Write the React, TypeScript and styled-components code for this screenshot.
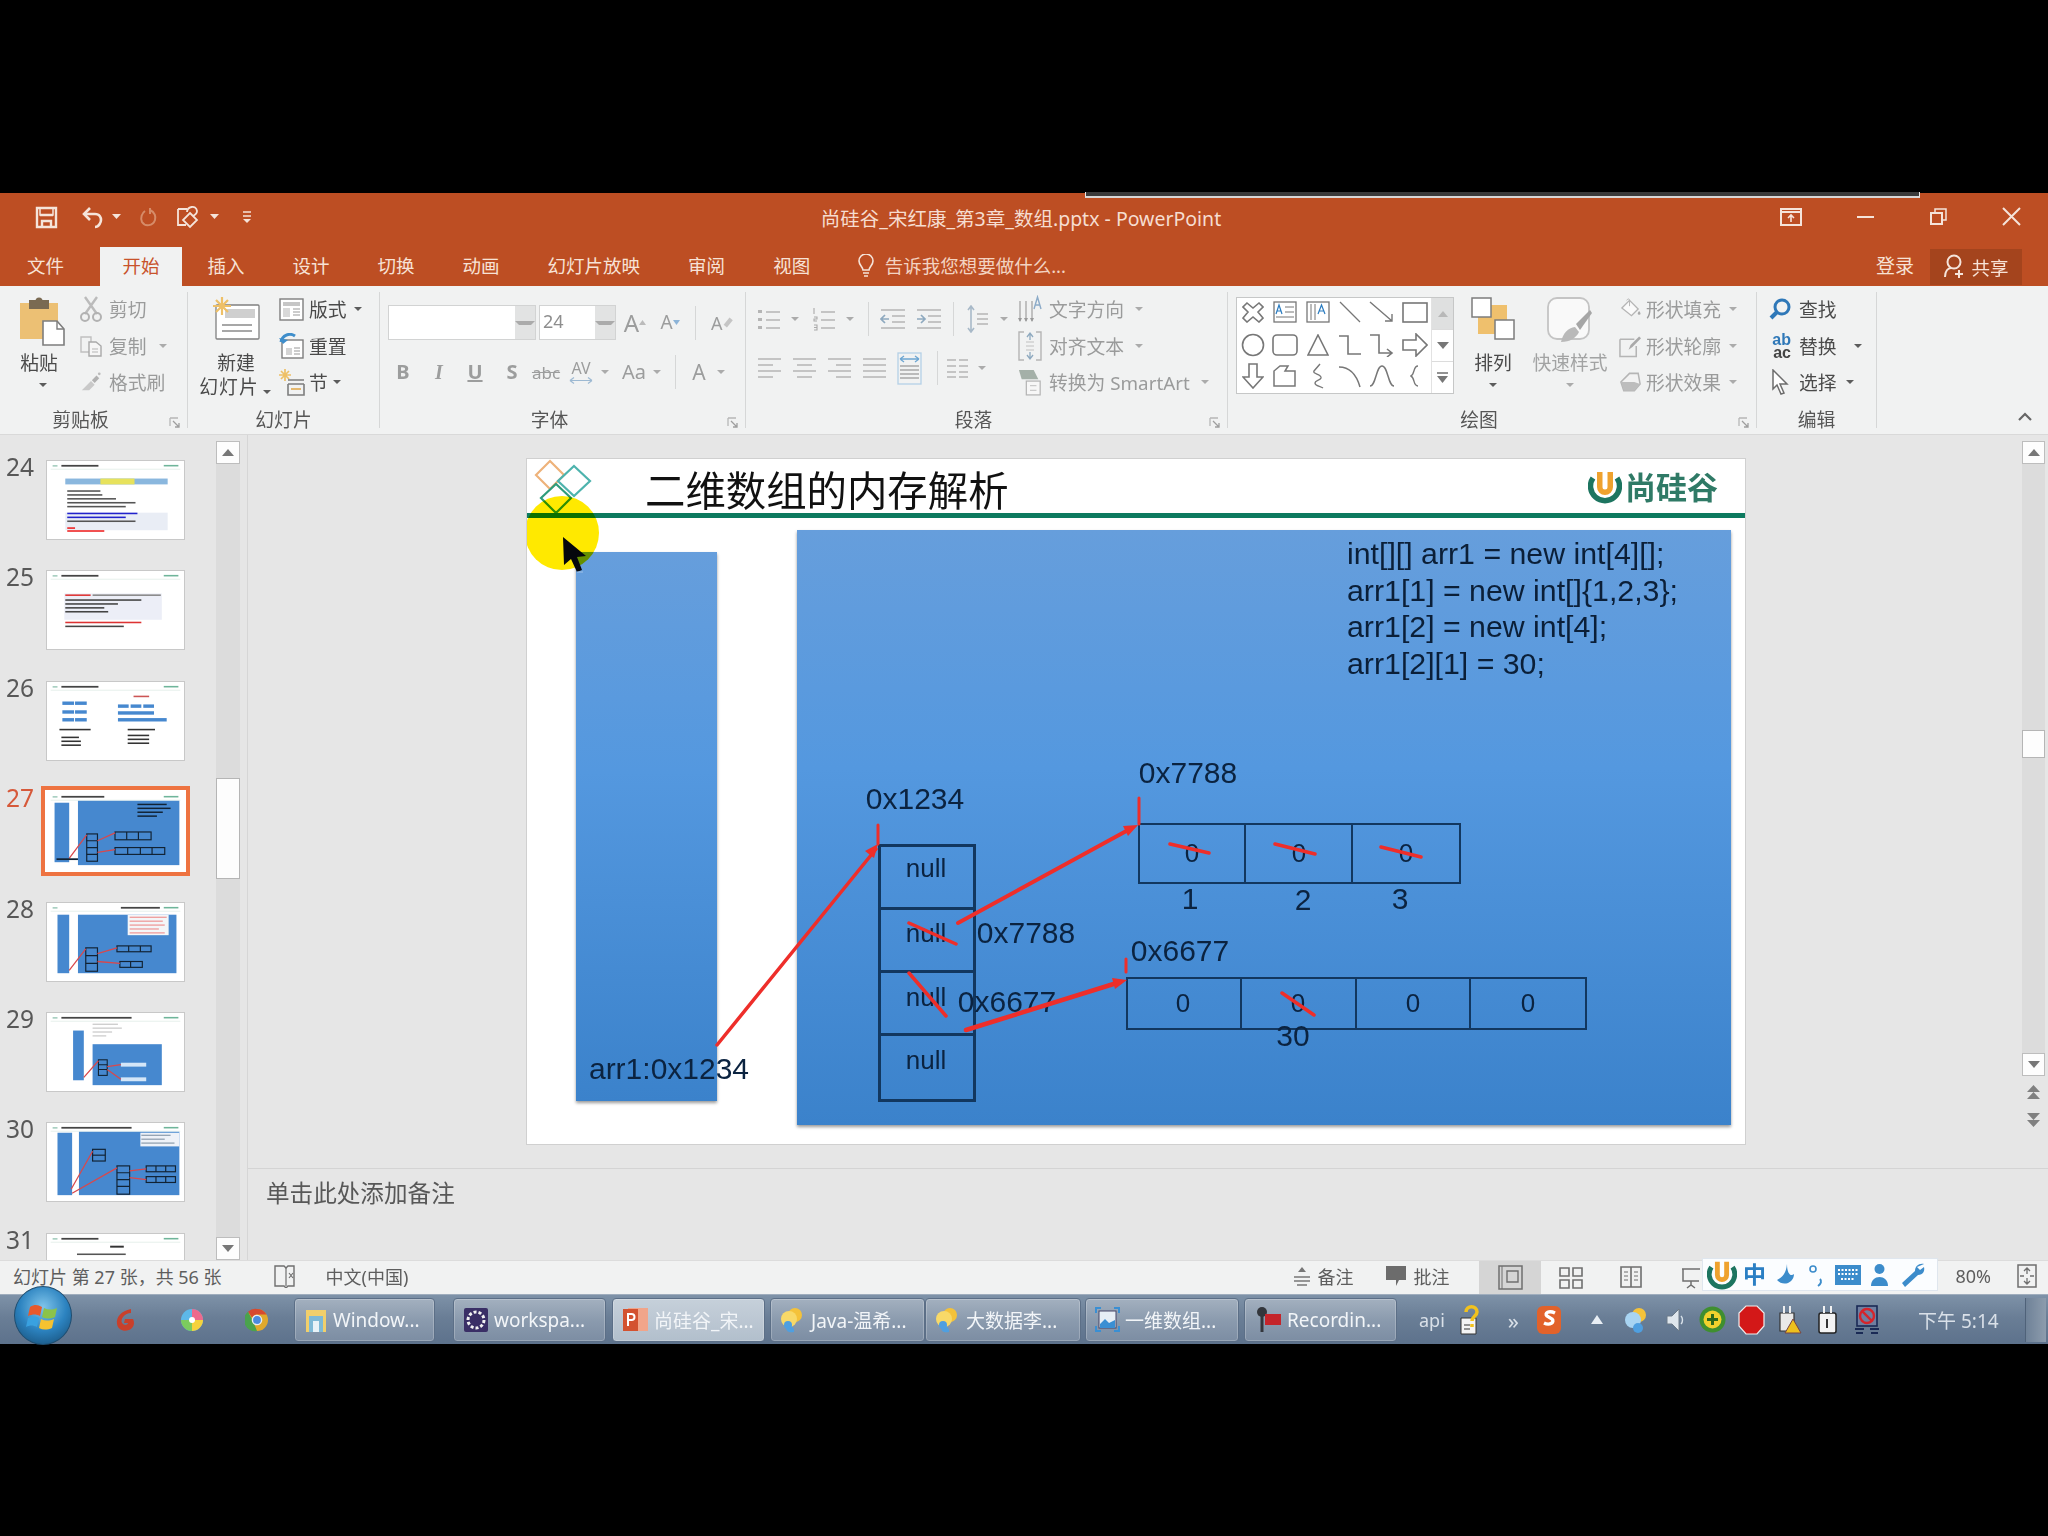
import React from "react";
import styled, { createGlobalStyle } from "styled-components";

const Global = createGlobalStyle`
  html, body { margin: 0; padding: 0; background: #000; }
  #root { width: 2048px; height: 1536px; overflow: hidden; }
  * { box-sizing: border-box; }
`;

const UI = `"Noto Sans", "Noto Sans CJK SC", sans-serif`;
const ARIAL = `"Liberation Sans", "Noto Sans CJK SC", sans-serif`;

/* ---------- shell ---------- */
const Screen = styled.div`
  width: 2048px; height: 1536px; background: #000; padding-top: 193px;
  font-family: ${UI}; position: relative; overflow: hidden;
`;
const VideoEdge = styled.div`
  position: absolute; left: 1085px; top: 192px; width: 835px; height: 6px;
  background: #3a3a3a; border: 1px solid #e8e8e8; border-top: 0; border-bottom: 2px solid #d8d8d8; z-index: 3;
`;
const Win = styled.div`
  width: 2048px; height: 1151px; display: flex; flex-direction: column; filter: blur(0.6px);
`;
const TitleBar = styled.div`
  height: 54px; background: #bd4e23; display: grid; grid-template-columns: 1fr auto 1fr;
  align-items: center; color: #f7e4da;
`;
const Qat = styled.div`display: flex; align-items: center; padding-left: 35px; height: 100%; padding-bottom: 6px;`;
const QatBtn = styled.div<{ $w: number; $ml?: number }>`
  width: ${p => p.$w}px; margin-left: ${p => p.$ml ?? 0}px; display: flex; justify-content: center; align-items: center;
`;
const DocTitle = styled.div`
  font-size: 19.5px; color: #f6ddd0; padding-right: 6px; white-space: nowrap; padding-bottom: 6px;
`;
const WinCtrls = styled.div`display: flex; justify-content: flex-end; align-items: center; padding-bottom: 7px;`;
const WinBtn = styled.div<{ $w: number }>`
  width: ${p => p.$w}px; display: flex; justify-content: center;
`;
const Tabs = styled.div`
  height: 39px; background: #bd4e23; display: flex; align-items: stretch; padding-left: 4.5px; color: #f7e2d6;
`;
const Tab = styled.div<{ $active?: boolean; $mr?: number }>`
  padding: 0 22.5px 3px; margin-right: ${p => p.$mr ?? 3}px; font-size: 18.5px; display: flex; align-items: center;
  ${p => p.$active ? "background:#f1f2f2;color:#c8532b;" : ""}
`;
const TellMe = styled.div`
  margin-left: 22px; display: flex; align-items: center; gap: 11px; font-size: 18.5px; color: #f3d3c2; padding-bottom: 3px;
`;
const TabRight = styled.div`margin-left: auto; display: flex; align-items: center; padding-right: 26px;`;
const Login = styled.div`font-size: 19px; margin-right: 16px; padding-bottom: 3px;`;
const Share = styled.div`
  width: 92px; height: 36px; background: #a4441d; display: flex; align-items: center; justify-content: center; gap: 6px; font-size: 18.5px;
`;

/* ---------- ribbon ---------- */
const Ribbon = styled.div`
  height: 149px; background: #f1f2f2; display: flex; padding: 6px 0 6px; border-bottom: 1px solid #d9d9d9; position: relative;
`;
const Group = styled.div<{ $w: number }>`
  width: ${p => p.$w}px; display: flex; flex-direction: column; border-right: 1px solid #d6d7d7;
`;
const GroupBody = styled.div<{ $pl?: number; $gap?: number }>`
  height: 118px; flex: none; display: flex; padding-left: ${p => p.$pl ?? 0}px; gap: ${p => p.$gap ?? 0}px;
`;
const GroupFoot = styled.div`height: 18px; flex: none; display: flex; align-items: center;`;
const GroupName = styled.div`flex: 1; text-align: center; font-size: 18.8px; color: #565656; white-space: nowrap;`;
const Launcher = styled.div`width: 26px; display: flex; justify-content: center; padding-top: 6px;`;
const Big = styled.div<{ $w: number; $off?: boolean; $ml?: number }>`
  width: ${p => p.$w}px; margin-left: ${p => p.$ml ?? 0}px; display: flex; flex-direction: column; align-items: center; flex: none;
  color: ${p => p.$off ? "#a2a3a3" : "#4a4a4a"}; font-size: 18.8px; line-height: 24px; white-space: nowrap;
`;
const BigIcon = styled.div`height: 59px; padding-top: 5px; display: flex; justify-content: center; align-items: flex-start;`;
const PasteLabel = styled.span`margin-right: 8px;`;
const WideLabel = styled.span`letter-spacing: 1px; margin-right: 2px;`;
const Small = styled.div<{ $ml?: number }>`display: flex; flex-direction: column; margin-top: -1px; margin-left: ${p => p.$ml ?? 0}px;`;
const SmallRow = styled.div<{ $off?: boolean; $gap?: number }>`
  height: 36.5px; display: flex; align-items: center; gap: ${p => p.$gap ?? 7}px;
  font-size: 18.8px; color: ${p => p.$off ? "#9a9b9b" : "#4a4a4a"}; white-space: nowrap;
`;
const SmallIcon = styled.div<{ $w: number }>`width: ${p => p.$w}px; display: flex; justify-content: center;`;
const ReplaceMark = styled.div`
  width: 22px; font-family: "Liberation Sans", sans-serif; font-weight: 700; font-size: 16px; line-height: 13px; text-align: right; color: #444;
  b { display: block; color: #2f78b8; }
`;
const Caret = styled.span<{ $off?: boolean; $ml?: number; $mt?: number }>`
  display: inline-block; width: 0; height: 0; border-left: 4px solid transparent; border-right: 4px solid transparent;
  border-top: 4.5px solid ${p => p.$off ? "#ababab" : "#5c5c5c"}; margin-left: ${p => p.$ml ?? 0}px; margin-top: ${p => p.$mt ?? 0}px; flex: none;
`;
const Rows = styled.div`display: flex; flex-direction: column;`;
const ToolRow = styled.div<{ $h: number; $mt: number }>`
  height: ${p => p.$h}px; margin-top: ${p => p.$mt}px; display: flex; align-items: center;
`;
const Tool = styled.div<{ $w: number; $ml?: number }>`
  width: ${p => p.$w}px; margin-left: ${p => p.$ml ?? 0}px; display: flex; justify-content: center; align-items: center; color: #a2a3a3; flex: none;
`;
const StackTool = styled(Tool)`flex-direction: column; line-height: 1;`;
const VSep = styled.div<{ $ml?: number; $mr?: number; $h?: number }>`
  width: 1px; height: ${p => p.$h ?? 34}px; background: #d6d7d7; margin-left: ${p => p.$ml ?? 0}px; margin-right: ${p => p.$mr ?? 0}px; flex: none;
`;
const Combo = styled.div<{ $w: number; $btn: number }>`
  width: ${p => p.$w}px; height: 35px; border: 1px solid #d2d3d3; background: #fff; display: flex; margin-right: 3px; color: #8e8e8e; font-size: 18px;
  span { flex: 1; padding-left: 3px; line-height: 30px; }
  i { width: ${p => p.$btn}px; background: #e2e3e3; display: flex; align-items: center; justify-content: center; }
`;
const FmtLetter = styled.span<{ $b?: boolean; $i?: boolean; $u?: boolean; $s?: number; $serif?: boolean; $c?: string }>`
  font-size: ${p => p.$s ?? 20}px; font-family: ${p => p.$serif ? `"Liberation Serif", serif` : UI};
  font-weight: ${p => p.$b ? 700 : 400}; font-style: ${p => p.$i ? "italic" : "normal"};
  text-decoration: ${p => p.$u ? "underline" : "none"}; color: ${p => p.$c ?? "#9c9d9d"}; line-height: 1;
`;
const Gallery = styled.div`
  width: 218px; height: 97px; margin: 5px 0 0 8px; border: 1px solid #c6c7c7; background: #fff; display: flex; flex: none;
`;
const ShapeGrid = styled.div`
  flex: 1; display: grid; grid-template-columns: repeat(6, 32.3px); grid-template-rows: 33px 33px 29px; justify-items: center; align-items: center;
`;
const GalScroll = styled.div`
  width: 22px; display: flex; flex-direction: column; border-left: 1px solid #e2e2e2;
`;
const GalBtn = styled.div<{ $off?: boolean }>`
  flex: 1; display: flex; align-items: center; justify-content: center; background: ${p => p.$off ? "#dfe0e0" : "#fff"};
  & + & { border-top: 1px solid #dcdcdc; }
`;
const Collapse = styled.div`position: absolute; right: 16px; bottom: 8px;`;

/* ---------- main ---------- */
const Main = styled.div`height: 825px; background: #e6e6e6; display: flex;`;
const Pane = styled.div`width: 248px; display: flex; border-right: 1px solid #d6d6d6;`;
const ThumbList = styled.div`width: 216px; padding-top: 25px; overflow: hidden; height: 825px;`;
const ThumbRow = styled.div`height: 110.4px; display: flex;`;
const ThumbNo = styled.div<{ $sel?: boolean }>`
  width: 46px; padding-left: 6px; font-size: 24.5px; line-height: 14px; color: ${p => p.$sel ? "#d6593a" : "#585858"};
`;
const Thumb = styled.div<{ $sel?: boolean }>`
  width: 139px; height: 80px; background: #fff; flex: none; border: 1px solid ${p => p.$sel ? "#fff" : "#c8c8c8"};
  ${p => p.$sel ? "box-shadow: 0 0 0 1px #fff, 0 0 0 5px #ee7341;" : ""}
`;
const ThumbSvg = styled.svg`display: block; filter: blur(0.6px);`;
const VScroll = styled.div<{ $w: number; $h?: number }>`
  width: ${p => p.$w}px; background: #dcdcdc; margin-top: 6px; display: flex; flex-direction: column; flex: none;
  height: ${p => p.$h ? p.$h + "px" : "auto"};
`;
const ScrollBtn = styled.div`
  height: 23px; background: #fdfdfd; border: 1px solid #bdbdbd; display: flex; align-items: center; justify-content: center; flex: none;
`;
const ScrollThumb = styled.div<{ $top: number; $h: number }>`
  height: ${p => p.$h}px; margin-top: ${p => p.$top}px; background: #fdfdfd; border: 1px solid #b5b5b5; flex: none;
`;
const Spacer = styled.div`flex: 1;`;
const Stage = styled.div`flex: 1; display: flex; flex-direction: column;`;
const SlideArea = styled.div`height: 734px; display: flex; border-bottom: 1px solid #d4d4d4;`;
const SlideWrap = styled.div`flex: 1; padding: 24px 0 0 279px;`;
const RightCol = styled.div`width: 25px; margin-right: 2px; display: flex; flex-direction: column; align-items: center;`;
const Nav = styled.div<{ $mt: number }>`margin-top: ${p => p.$mt}px; display: flex;`;
const Notes = styled.div`flex: 1; padding: 6px 0 0 18px; font-size: 23.6px; color: #585858;`;

/* ---------- slide ---------- */
const Slide = styled.div`
  width: 1218px; height: 685px; background: #fff; position: relative; box-shadow: 0 0 0 1px #d0d0d0; overflow: hidden;
`;
const SlideTitle = styled.div`
  position: absolute; left: 118px; top: 5px; font-size: 40.4px; line-height: 50px; color: #111; font-family: "Noto Sans CJK SC", sans-serif; white-space: nowrap;
`;
const HeadRule = styled.div`position: absolute; left: 0; right: 0; top: 54px; height: 5px; background: #0d7a5f;`;
const LogoBox = styled.div`position: absolute; left: 1061px; top: 11px; display: flex; align-items: center; gap: 3px;`;
const LogoText = styled.div`font-size: 31px; font-weight: 700; color: #2f7a66; font-family: "Noto Sans CJK SC", sans-serif; line-height: 34px; white-space: nowrap; margin-top: -3px;`;
const BlueBox = styled.div<{ $x: number; $y: number; $w: number; $h: number }>`
  position: absolute; left: ${p => p.$x}px; top: ${p => p.$y}px; width: ${p => p.$w}px; height: ${p => p.$h}px;
  background: linear-gradient(180deg, #669edc 0%, #5498df 40%, #3b82cb 100%);
  box-shadow: 0 2px 3px rgba(0,0,0,.4);
`;
const Code = styled.div`
  position: absolute; left: 820px; top: 77px; font-family: ${ARIAL}; font-size: 30.3px; line-height: 36.7px; color: #0b1f38; white-space: pre;
`;
const Lbl = styled.div<{ $x: number; $y: number; $s?: number }>`
  position: absolute; left: ${p => p.$x}px; top: ${p => p.$y}px; transform: translate(-50%, -50%);
  font-family: ${ARIAL}; font-size: ${p => p.$s ?? 30}px; color: #0b2340; white-space: nowrap; line-height: 1;
`;
const Stack = styled.div`
  position: absolute; left: 351px; top: 385px; width: 98px; height: 258px; border: 3px solid #12375f;
  display: grid; grid-template-rows: repeat(4, 1fr);
`;
const StackCell = styled.div`border-bottom: 3px solid #12375f; &:last-child { border-bottom: 0; }`;
const Cells = styled.div<{ $x: number; $y: number; $w: number; $h: number; $n: number }>`
  position: absolute; left: ${p => p.$x}px; top: ${p => p.$y}px; width: ${p => p.$w}px; height: ${p => p.$h}px;
  border: 2.5px solid #12375f; display: grid; grid-template-columns: repeat(${p => p.$n}, 1fr);
`;
const Cell = styled.div`border-right: 2.5px solid #12375f; &:last-child { border-right: 0; }`;
const Overlay = styled.svg<{ $x?: number; $y?: number }>`position: absolute; left: ${p => p.$x ?? 0}px; top: ${p => p.$y ?? 0}px;`;
const Highlight = styled.div`
  position: absolute; left: -2px; top: 37px; width: 74px; height: 74px; border-radius: 50%;
  background: #ffe900; mix-blend-mode: multiply;
`;

/* ---------- status + taskbar ---------- */
const Status = styled.div`
  height: 34px; background: #f1f2f2; border-top: 1px solid #dcdcdc; display: flex; align-items: center; font-size: 18px; color: #5e5e5e; position: relative;
`;
const StatusItem = styled.div<{ $ml: number; $pb?: number }>`
  margin-left: ${p => p.$ml}px; display: flex; align-items: center; gap: 7px; white-space: nowrap; padding-bottom: ${p => p.$pb ?? 3}px;
`;
const ViewBtn = styled.div<{ $w: number; $on?: boolean }>`
  width: ${p => p.$w}px; height: 33px; display: flex; align-items: center; justify-content: center; background: ${p => p.$on ? "#d5d5d5" : "transparent"};
`;
const Ime = styled.div`
  position: absolute; left: 1702px; top: -3px; width: 236px; height: 33px; background: #fbfdff; border: 1px solid #dfe6ee;
  display: flex; align-items: center; padding-left: 4px;
`;
const ImeCn = styled.div`font-size: 23px; color: #2b7fc4; font-weight: 700; margin-left: 6px; line-height: 1; width: 26px;`;
const TaskBar = styled.div`
  height: 50px; background: linear-gradient(180deg, #7e92a8 0%, #6a7e96 45%, #5d728c 100%); display: flex; align-items: center; position: relative; border-top: 1px solid #9fadbd;
`;
const Orb = styled.div`
  position: absolute; left: 14px; top: -9px; width: 58px; height: 59px; border-radius: 50%;
  background: radial-gradient(circle at 50% 35%, #7fc4ea 0%, #2c83c0 50%, #14486f 100%); border: 1px solid #1e4d70;
  display: flex; align-items: center; justify-content: center;
`;
const TrayIcon = styled.div<{ $ml: number }>`margin-left: ${p => p.$ml}px; display: flex; align-items: center; flex: none;`;
const TaskBtn = styled.div<{ $w: number; $ml: number; $on?: boolean }>`
  width: ${p => p.$w}px; margin-left: ${p => p.$ml}px; height: 44px; border-radius: 4px; flex: none;
  background: ${p => p.$on ? "linear-gradient(180deg,#c6d0da,#b2bfcc)" : "linear-gradient(180deg,#a3b0bf 0%,#8b9bae 50%,#7c8da3 100%)"};
  border: 1px solid #5c6f87; box-shadow: inset 0 0 0 1px rgba(255,255,255,.22);
  display: flex; align-items: center; gap: 5px; padding-left: 9px; color: #f2f5f8; font-size: 19px; white-space: nowrap; overflow: hidden;
`;
const TrayText = styled.div<{ $ml: number; $s?: number }>`margin-left: ${p => p.$ml}px; color: #d9e0e8; font-size: ${p => p.$s ?? 18}px; white-space: nowrap;`;
const ShowDesk = styled.div`margin-left: auto; margin-right: 2px; width: 21px; height: 44px; background: linear-gradient(90deg,#6f8298,#8d9cad); border-left: 1px solid #4f6279;`;

/* ---------- icons ---------- */
type SP = { w: number; h?: number; vb?: string; children: React.ReactNode };
const S = ({ w, h, vb, children }: SP) => (
  <svg width={w} height={h ?? w} viewBox={vb ?? `0 0 ${w} ${h ?? w}`} fill="none">{children}</svg>
);
const D = "#6f6f6f";
const W = "#f5e4da";

const I = {
  save: <S w={23}><path d="M2 2h19v19H2z" stroke={W} strokeWidth="2.4"/><path d="M5 9h13M7 21v-6h9v6" stroke={W} strokeWidth="2.4"/><path d="M5 2v7h13V2" stroke={W} strokeWidth="1.5"/></S>,
  undo: <S w={23}><path d="M9 2 3 8l6 6" stroke={W} strokeWidth="2.6"/><path d="M3 8h11c5 0 6 4 6 6s-2 7-6 7" stroke={W} strokeWidth="2.6"/></S>,
  redo: <S w={21}><path d="M13 3c5 2 6 7 5 10-2 6-10 7-13 2C3 11 5 6 8 4" stroke="#d68c69" strokeWidth="2"/><path d="M13 1v6" stroke="#d68c69" strokeWidth="2"/></S>,
  touch: <S w={26}><path d="M3 5h9M3 5v16h8" stroke={W} strokeWidth="1.8"/><path d="m15 9 7 7-7 7-7-7z" stroke={W} strokeWidth="1.8"/><path d="M12 8c0-5 9-8 10-1 0 3-2 4-4 5" stroke={W} strokeWidth="1.8"/></S>,
  qatMore: <S w={10} h={14}><path d="M1 2h8M1 6h8" stroke={W} strokeWidth="1.5"/><path d="m1 9 4 4 4-4z" fill={W}/></S>,
  smallDd: <S w={9} h={6}><path d="m0 0 4.5 5L9 0z" fill={W}/></S>,
  ribbonMode: <S w={22} h={18}><path d="M1 1h20v16H1zM1 4h20" stroke={W} strokeWidth="2"/><path d="M11 14V7m-3 3 3-3 3 3" stroke={W} strokeWidth="1.6"/></S>,
  min: <S w={17} h={4}><path d="M0 2h17" stroke={W} strokeWidth="2"/></S>,
  restore: <S w={17}><path d="M1 5h11v11H1z" stroke={W} strokeWidth="2"/><path d="M5 4V1h11v11h-3" stroke={W} strokeWidth="1.5"/></S>,
  close: <S w={19}><path d="m1 1 17 17M18 1 1 18" stroke={W} strokeWidth="2"/></S>,
  bulb: <S w={16} h={23}><path d="M5 16c0-3-4-5-4-9a7 7 0 0 1 14 0c0 4-4 6-4 9z" stroke={W} strokeWidth="1.6"/><path d="M5 19h6M6 22h4" stroke={W} strokeWidth="1.6"/></S>,
  person: <S w={22} h={25}><circle cx="11" cy="8" r="6.5" stroke={W} strokeWidth="2"/><path d="M2 23c0-6 3-9 6-9" stroke={W} strokeWidth="2"/><path d="M16 16v8M12 20h8" stroke={W} strokeWidth="2"/></S>,
  paste: <S w={46} h={50}><rect x="0" y="6" width="38" height="36" fill="#ecc074"/><rect x="9" y="3" width="20" height="9" fill="#7a6a52"/><circle cx="19" cy="4" r="3.5" fill="#7a6a52"/><path d="M23 24h14l7 8v16H23z" fill="#fff" stroke="#7d7d7d" strokeWidth="1.6"/><path d="M37 24v8h7" stroke="#7d7d7d" strokeWidth="1.4"/></S>,
  cut: <S w={22} h={26}><path d="M5 1l12 17M17 1 5 18" stroke="#bbb" strokeWidth="2.4"/><circle cx="5" cy="21" r="4" stroke="#b2b2b2" strokeWidth="2"/><circle cx="17" cy="21" r="4" stroke="#b2b2b2" strokeWidth="2"/></S>,
  copy: <S w={22}><path d="M1 2h10v15H1z" stroke="#c0c0c0" strokeWidth="1.4"/><path d="M9 7h7l5 4v10H9z" fill="#f6f6f6" stroke="#a9a9a9" strokeWidth="1.4"/><path d="M12 14h6M12 17h6" stroke="#b5b5b5"/></S>,
  brush: <S w={24}><path d="M2 21 12 11l4 4-6 6z" fill="#c9c9c9"/><path d="m13 10 5-5 3 3-5 5z" fill="#b1b1b1"/><circle cx="21" cy="3" r="1.5" fill="#bbb"/></S>,
  newSlide: <S w={47} h={44}><rect x="3" y="8" width="43" height="34" rx="1" fill="#fff" stroke="#808080" strokeWidth="1.3"/><rect x="12" y="12" width="30" height="9" fill="#cfcfcf"/><path d="M9 28h30M9 34h30" stroke="#8a8a8a" strokeWidth="1.5"/><g stroke="#eec067" strokeWidth="2.2"><path d="M9 0v18M0 9h18M3 3l12 12M15 3 3 15"/></g></S>,
  layout: <S w={25} h={23}><rect x="1" y="1" width="23" height="21" fill="#fff" stroke="#7e7e7e" strokeWidth="1.4"/><rect x="4" y="4" width="17" height="4" fill="#c6c6c6"/><rect x="4" y="10" width="7" height="9" fill="#d9d9d9"/><path d="M14 11h7M14 14h7M14 17h7" stroke="#999"/></S>,
  reset: <S w={25} h={26}><rect x="3" y="7" width="21" height="18" fill="#fff" stroke="#7e7e7e" strokeWidth="1.4"/><path d="M2 9a9 9 0 0 1 14-6" stroke="#3f8ecb" strokeWidth="3"/><path d="m0 5 4 6 5-4z" fill="#3f8ecb"/><path d="M7 15h6v7H7z" fill="#d4d4d4"/><path d="M15 15h6M15 18h6M15 21h6" stroke="#999"/></S>,
  section: <S w={27} h={27}><g stroke="#eec067" strokeWidth="1.7"><path d="M6 0v12M0 6h12M2 2l8 8M10 2 2 10"/></g><path d="M9 11h16M9 15h16M9 15v11h16V15" stroke="#7d7d7d" strokeWidth="1.6"/><path d="M12 20h10" stroke="#e2a94e" strokeWidth="1.6"/></S>,
  launcher: <S w={11}><path d="M1 1h8M1 1v8" stroke="#b7b7b7" strokeWidth="1.3"/><path d="m4 4 6 6M10 6v4H6" stroke="#9e9e9e" strokeWidth="1.3"/></S>,
  triUp: <S w={7} h={5}><path d="m0 5 3.5-5L7 5z" fill="#bbb"/></S>,
  triDn: <S w={7} h={5}><path d="m0 0 3.5 5L7 0z" fill="#8db4d8"/></S>,
  eraser: <S w={16} h={17}><path d="M1 12 10 1l5 4-9 11z" fill="#c5c5c5"/></S>,
  avArrow: <S w={24} h={9}><path d="M1 4.5h22m-22 0 4-3m-4 3 4 3m18-3-4-3m4 3-4 3" stroke="#9db9d2" strokeWidth="1.2"/></S>,
  bullets: <S w={23} h={22}><g fill="#b5b5b5"><rect x="0" y="2" width="4" height="3"/><rect x="0" y="10" width="4" height="3"/><rect x="0" y="18" width="4" height="3"/></g><path d="M8 4h14M8 12h14M8 20h14" stroke="#b5b5b5" strokeWidth="1.6"/></S>,
  numbers: <S w={24} h={24}><g stroke="#aaa" strokeWidth="1.1"><path d="M2 1v6M2 10h3v2H2v2h3M2 18h3v5H2M2 20.500h3"/></g><path d="M9 5h14M9 13h14M9 21h14" stroke="#b5b5b5" strokeWidth="1.6"/></S>,
  outdent: <S w={26} h={22}><path d="M1 2h24M12 8h13M12 14h13M1 20h24" stroke="#b5b5b5" strokeWidth="1.7"/><path d="M9 11H1m4-4-4 4 4 4" stroke="#8ea9bf" strokeWidth="1.7"/></S>,
  indent: <S w={26} h={22}><path d="M1 2h24M12 8h13M12 14h13M1 20h24" stroke="#b5b5b5" strokeWidth="1.7"/><path d="M1 11h8m-4-4 4 4-4 4" stroke="#8ea9bf" strokeWidth="1.7"/></S>,
  spacing: <S w={22} h={28}><path d="M4 2v24M1 5l3-4 3 4M1 23l3 4 3-4" stroke="#a8b9c8" strokeWidth="1.6"/><path d="M10 9h11M10 14h11M10 19h11" stroke="#b5b5b5" strokeWidth="1.7"/></S>,
  al: (a: number) => <S w={23} h={22}><path d={a === 0 ? "M0 2h23M0 8h15M0 14h23M0 20h15" : a === 1 ? "M0 2h23M4 8h15M0 14h23M4 20h15" : a === 2 ? "M0 2h23M8 8h15M0 14h23M8 20h15" : "M0 2h23M0 8h23M0 14h23M0 20h23"} stroke="#b5b5b5" strokeWidth="1.7"/></S>,
  dist: <S w={25} h={33}><rect x="1" y="1" width="23" height="31" stroke="#b4d0e6" strokeWidth="1.3"/><path d="M3 14h19M3 18h19M3 22h19M3 26h19" stroke="#a8a8a8" strokeWidth="1.7"/><path d="M3 7h19m-19 0 4-3m-4 3 4 3m15-3-4-3m4 3-4 3" stroke="#6da6d2" strokeWidth="1.3"/></S>,
  cols: <S w={21} h={20}><path d="M0 2h9M12 2h9M0 8h9M12 8h9M0 14h9M12 14h9M0 19h9M12 19h9" stroke="#b5b5b5" strokeWidth="1.7"/></S>,
  textDir: <S w={24} h={28}><path d="M2 6v20M8 6v20M14 6v20" stroke="#b0b0b0" strokeWidth="1.5"/><path d="m0 23 2 4 2-4m2 0 2 4 2-4m2 0 2 4 2-4" fill="#999"/><path d="m16 14 3.500-12L23 14m-5.500-4h4" stroke="#8cabc8" strokeWidth="1.4"/></S>,
  alignText: <S w={24} h={30}><path d="M6 1H1v28h5M18 1h5v28h-5" stroke="#b5b5b5" strokeWidth="1.4"/><path d="M8 11h8M8 15h8M8 19h8" stroke="#c0c0c0"/><path d="M12 2v7m-3-3 3-4 3 4M12 28v-7m-3 3 3 4 3-4" stroke="#8ea9bf" strokeWidth="1.3"/></S>,
  smart: <S w={26} h={30}><path d="M1 2h16l5 10H4z" fill="#a4b0a8"/><rect x="9" y="14" width="15" height="15" fill="#f7f7f7" stroke="#b3b3b3" strokeWidth="1.3"/><path d="M13 19h7M13 24h7" stroke="#bbb"/></S>,
  arrange: <S w={45} h={43}><rect x="7" y="8" width="29" height="29" fill="#efc06d"/><rect x="1" y="1" width="19" height="19" fill="#fff" stroke="#7c7c7c" strokeWidth="1.5"/><rect x="24" y="23" width="19" height="19" fill="#fff" stroke="#7c7c7c" strokeWidth="1.5"/></S>,
  quick: <S w={48} h={46}><rect x="2" y="1" width="41" height="41" rx="9" fill="#f9f9f9" stroke="#c4c4c4" strokeWidth="1.8"/><path d="M15 45c2-9 7-14 14-15l4 5c-3 6-9 10-18 10z" fill="#b9b9b9"/><path d="m30 27 14-14 2 3-12 17z" fill="#a6a6a6"/></S>,
  fill: <S w={24}><path d="m3 11 8-8 9 9-7 7z" fill="#fafafa" stroke="#b5b5b5" strokeWidth="1.4"/><path d="M8 3c1-2 3-2 3 0v6" stroke="#b5b5b5"/><path d="M21 14c2 2 2 4 0 4s-2-2 0-4z" fill="#a9a9a9"/></S>,
  outline: <S w={24}><path d="M1 5h15M1 5v18h17V12" stroke="#b5b5b5" strokeWidth="1.6"/><path d="m10 16 2-5 9-9 2 2-9 9z" fill="#a9a9a9"/></S>,
  effects: <S w={24}><path d="M2 12 11 3h9l2 11-6 7H5z" fill="#f2f2f2" stroke="#b5b5b5" strokeWidth="1.6"/><path d="M2 12h14l6 2-6 7H5z" fill="#bdbdbd"/></S>,
  find: <S w={22}><circle cx="13" cy="9" r="7" stroke="#2f78b8" strokeWidth="3"/><path d="M8 14 2 20" stroke="#2f78b8" strokeWidth="4"/></S>,
  select: <S w={18} h={26}><path d="m2 1 14 14H9l4 9-3 1-4-9-4 4z" fill="#fff" stroke="#6d6d6d" strokeWidth="1.5"/></S>,
  chevUp: <S w={14} h={9}><path d="m1 8 6-6 6 6" stroke="#666" strokeWidth="2.2"/></S>,
  up: <S w={12} h={7}><path d="M0 7 6 0l6 7z" fill="#777"/></S>,
  upOff: <S w={10} h={6}><path d="M0 6 5 0l5 6z" fill="#b8b8b8"/></S>,
  down: <S w={12} h={7}><path d="M0 0l6 7 6-7z" fill="#777"/></S>,
  more: <S w={11} h={12}><path d="M0 1h11" stroke="#777" strokeWidth="1.6"/><path d="M0 4h11l-5.500 7z" fill="#777"/></S>,
  dblUp: <S w={13} h={14}><path d="m0 7 6.5-7L13 7zM0 14l6.5-7 6.5 7z" fill="#808080"/></S>,
  dblDn: <S w={13} h={14}><path d="m0 0 6.5 7L13 0zM0 7l6.5 7L13 7z" fill="#808080"/></S>,
  spell: <S w={24} h={24}><path d="M1 2h9l2 2 2-2h6v20h-6l-2 2-2-2H1z" stroke="#6f6f6f" strokeWidth="1.4"/><path d="M12 4v18M15 9l4 5m0-5-4 5" stroke="#6f6f6f" strokeWidth="1.2"/></S>,
  notes: <S w={16} h={20}><path d="M4 6l4-5 4 5z" fill="#777"/><path d="M0 11h16M0 15h16M3 19h10" stroke="#777" strokeWidth="1.5"/></S>,
  comment: <S w={20} h={21}><path d="M0 0h20v14h-7l-3 6v-6H0z" fill="#6c6c6c"/></S>,
  vNormal: <S w={25} h={25}><path d="M1 1h23v23H1z" stroke={D} strokeWidth="1.5"/><path d="M4 1v23" stroke={D} /><path d="M9 6h11v11H9z" stroke={D} strokeWidth="1.4"/></S>,
  vSorter: <S w={24}><path d="M1 2h9v8H1zM14 2h9v8h-9zM1 14h9v8H1zM14 14h9v8h-9z" stroke={D} strokeWidth="1.6"/></S>,
  vRead: <S w={22} h={25}><path d="M1 2h20v20H1zM11 2v20" stroke={D} strokeWidth="1.6"/><path d="M4 7h4M4 11h4M4 15h4M14 7h4M14 11h4M14 15h4" stroke={D}/></S>,
  vShow: <S w={18} h={22}><path d="M0 2h18M1 2v12h16M9 14v4M5 21l4-3 4 3" stroke={D} strokeWidth="1.5"/></S>,
  fit: <S w={20} h={24}><path d="M1 1h18v22H1z" stroke={D} strokeWidth="1.5"/><path d="M10 4v6M7 7l3-3 3 3M10 20v-6M7 17l3 3 3-3M3 12h4M17 12h-4" stroke={D} strokeWidth="1.3"/></S>,
};

const Ulogo = ({ s }: { s: number }) => (
  <S w={s} vb="0 0 34 34">
    <path d="M5 8a14.500 14.500 0 1 0 24 0" stroke="#1d7560" strokeWidth="5.500" fill="none"/>
    <path d="M9 2v15a8 8 0 0 0 16 0V2h-5.500v15a2.500 2.500 0 0 1-5 0V2z" fill="#efa22e"/>
  </S>
);
const WinFlag = () => (
  <S w={34}>
    <path d="M4 8c5-3 8-2 12 0l-2 9c-4-2-7-2-12 0z" fill="#e8592b"/>
    <path d="M18 9c4 2 8 2 13 0l-2 9c-5 2-9 2-13 0z" fill="#8bc34a"/>
    <path d="M2 19c4-2 8-2 11 0l-2 9c-4-2-7-2-11 0z" fill="#39a1e0"/>
    <path d="M15 20c4 2 8 2 13 0l-2 9c-5 2-9 2-13 0z" fill="#f5c230"/>
  </S>
);

/* gallery shapes */
const sh = "#777";
const Shapes = [
  <S w={22}><path d="M5 2 11 7l6-5 4 4-5 5 5 6-4 4-6-5-6 5-4-4 5-6-5-5z" stroke={sh} strokeWidth="1.6"/></S>,
  <S w={24} h={22}><rect x="1" y="1" width="22" height="20" stroke={sh} strokeWidth="1.3"/><path d="m3 13 3-9 3 9m-5-3h4" stroke="#2b7cc0" strokeWidth="1.2"/><path d="M12 6h9M12 11h9M3 16h18" stroke={sh}/></S>,
  <S w={24} h={22}><rect x="1" y="1" width="22" height="20" stroke={sh} strokeWidth="1.3"/><path d="M5 3v16M9 3v16" stroke={sh}/><path d="m12 13 3.500-9L19 13m-5.500-3h4" stroke="#2b7cc0" strokeWidth="1.2"/></S>,
  <S w={22}><path d="m1 1 20 20" stroke={sh} strokeWidth="1.3"/></S>,
  <S w={26} h={22}><path d="m1 1 22 19m0-7v7h-7" stroke={sh} strokeWidth="1.4"/></S>,
  <S w={26} h={21}><rect x="1" y="1" width="24" height="19" stroke={sh} strokeWidth="1.6"/></S>,
  <S w={24}><circle cx="12" cy="12" r="10.5" stroke={sh} strokeWidth="1.6"/></S>,
  <S w={26} h={22}><rect x="1" y="1" width="24" height="20" rx="4" stroke={sh} strokeWidth="1.6"/></S>,
  <S w={22}><path d="M11 1 21 21H1z" stroke={sh} strokeWidth="1.6"/></S>,
  <S w={24} h={22}><path d="M1 2h9v18h13" stroke={sh} strokeWidth="1.6"/></S>,
  <S w={26} h={24}><path d="M1 2h9v18h12m-4-4 5 4-5 4" stroke={sh} strokeWidth="1.6"/></S>,
  <S w={26} h={24}><path d="M1 7h13V1l11 11-11 11v-6H1z" stroke={sh} strokeWidth="1.6"/></S>,
  <S w={22} h={26}><path d="M7 1h8v13h6L11 25 1 14h6z" stroke={sh} strokeWidth="1.6"/></S>,
  <S w={24} h={22}><path d="M1 21V6l6-5h8l-3 5h10v15z" stroke={sh} strokeWidth="1.5"/></S>,
  <S w={14} h={26}><path d="M9 1 3 8c-2 3 8 3 7 7-1 3-6 2-6 5 0 3 5 3 8 5" stroke={sh} strokeWidth="1.4"/></S>,
  <S w={24}><path d="M1 3c10 0 17 6 21 20" stroke={sh} strokeWidth="1.5"/></S>,
  <S w={26} h={24}><path d="M1 22C7 22 7 2 13 2s6 20 12 20" stroke={sh} strokeWidth="1.5"/></S>,
  <S w={10} h={22}><path d="M8 1C3 1 5 9 1 11c4 2 2 10 7 10" stroke={sh} strokeWidth="1.4"/></S>,
];

/* thumbnails */
const bar = (x: number, y: number, w: number, c = "#333", h = 1.6) => <rect key={`${x}-${y}-${w}`} x={x} y={y} width={w} height={h} fill={c} />;
const ThumbHead = ({ x = 14, w = 38 }: { x?: number; w?: number }) => (
  <>
    <path d="M5 5h5" stroke="#9cc8b8" strokeWidth="1.5"/>
    {bar(x, 4, w, "#444", 1.8)}
    {bar(119, 4, 15, "#6fb59a", 1.6)}
    {bar(3, 8, 133, "#dbe8e2", 0.7)}
  </>
);
const blue = "#4688cf";
const navy = "#123";
const ThumbArt: Record<number, React.ReactNode> = {
  24: <><ThumbHead/><rect x="18" y="18" width="105" height="6" fill="#8ab7de"/><rect x="54" y="18" width="35" height="6" fill="#e7e25c"/>
    <rect x="18" y="53" width="105" height="18" fill="#e9edf5"/>
    {[30,34,38,42,46].map((y,i)=>bar(20,y,[34,36,50,70,60][i],"#555"))}{bar(20,53,72,"#22c")}{bar(20,57,60,"#22c")}{bar(20,61,70,"#555")}{bar(20,68,8,"#e22")}{bar(20,71,38,"#e22")}</>,
  25: <><ThumbHead/><rect x="17" y="23" width="100" height="27" fill="#eceef7"/>{bar(18,24,26,"#d33")}{bar(46,24,70,"#888")}{bar(18,29,78,"#444")}{bar(18,33,54,"#444")}{bar(18,37,40,"#444")}{bar(18,41,44,"#444")}{bar(18,52,78,"#d33")}{bar(18,56,60,"#444")}</>,
  26: <><ThumbHead/>{[20,29,37].map(y=><g key={y}><rect x="15" y={y} width="12" height="3.500" fill={blue}/><rect x="28" y={y} width="12" height="3.500" fill={blue}/></g>)}
    {[23].map(y=><g key={y}><rect x="72" y={y} width="11" height="3.500" fill={blue}/><rect x="85" y={y} width="11" height="3.500" fill={blue}/><rect x="98" y={y} width="11" height="3.500" fill={blue}/></g>)}
    <rect x="72" y="37" width="50" height="3.500" fill={blue}/><rect x="72" y="30" width="37" height="3.500" fill={blue}/>{bar(88,14,16,"#c55")}{bar(12,48,32,"#333")}{bar(14,56,18,"#333")}{bar(14,60,20,"#333")}{bar(14,64,20,"#333")}{bar(82,48,28,"#333")}{bar(82,54,22,"#333")}{bar(82,58,22,"#333")}{bar(82,62,22,"#333")}</>,
  27: <><ThumbHead w={44}/><rect x="7" y="11" width="15" height="61" fill={blue}/><rect x="31" y="9" width="104" height="66" fill={blue}/>
    <g stroke={navy} strokeWidth="1.2" fill="none"><rect x="40" y="43" width="11" height="28"/><path d="M40 50h11M40 57h11M40 64h11"/><rect x="69" y="41" width="37" height="8"/><path d="M81 41v8M93 41v8"/><rect x="69" y="57" width="51" height="7"/><path d="M82 57v7M95 57v7M107 57v7"/></g>
    <path d="M22 68 40 44M51 50 69 42M51 62 69 59" stroke="#d9484c" strokeWidth="1.3"/>{[12,16,20,24].map((y,i)=>bar(92,y,[30,34,26,20][i],navy,1.5))}{bar(9,68,22,navy,1.8)}</>,
  28: <><ThumbHead x={75} w={40}/><rect x="10" y="12" width="12" height="60" fill={blue}/><rect x="31" y="12" width="101" height="60" fill={blue}/><rect x="82" y="12" width="42" height="21" fill="#f4f6f8"/>
    <g stroke={navy} strokeWidth="1.2" fill="none"><rect x="39" y="46" width="12" height="24"/><path d="M39 54h12M39 62h12"/><rect x="71" y="44" width="35" height="6"/><path d="M83 44v6M95 44v6"/><rect x="74" y="60" width="23" height="6"/><path d="M85 60v6"/></g>
    <path d="M22 69 39 47M51 52 71 46M51 60 74 62" stroke="#d9484c" strokeWidth="1.3"/>{[14,18,22,26,30].map((y,i)=>bar(84,y,[38,34,36,30,36][i],"#e99",1.3))}</>,
  29: <><ThumbHead w={72}/>{[11,15,19,23].map((y,i)=>bar(46,y,[26,30,20,14][i],"#bbb",1))}<rect x="26" y="18" width="11" height="51" fill={blue}/><rect x="46" y="32" width="71" height="42" fill={blue}/>
    <g stroke={navy} strokeWidth="1.1" fill="none"><rect x="52" y="48" width="9" height="16"/><path d="M52 53h9M52 58h9"/></g>
    <rect x="75" y="51" width="26" height="4" fill="#d4e6f8"/><rect x="75" y="66" width="26" height="4" fill="#d4e6f8"/><path d="M37 66 52 49M61 55 75 53M61 58 75 68" stroke="#d9484c" strokeWidth="1.3"/></>,
  30: <><ThumbHead w={72}/><rect x="10" y="10" width="15" height="64" fill={blue}/><rect x="32" y="9" width="103" height="65" fill={blue}/><rect x="95" y="10" width="40" height="14" fill="#eef2f8"/>{[12,16,20].map((y,i)=>bar(96,y,[30,24,34][i],"#89a",1.2))}
    <g stroke={navy} strokeWidth="1.2" fill="none"><rect x="46" y="27" width="13" height="12"/><path d="M46 33h13"/><rect x="71" y="44" width="13" height="29"/><path d="M71 51h13M71 58h13M71 65h13"/><rect x="101" y="44" width="30" height="6"/><path d="M111 44v6M121 44v6"/><rect x="101" y="55" width="30" height="6"/><path d="M111 55v6M121 55v6"/></g>
    <path d="M24 68 46 29M25 72 71 46M84 49 101 47M84 56 101 58" stroke="#d9484c" strokeWidth="1.3"/></>,
  31: <><ThumbHead/>{bar(64,12,14,"#333",2)}{bar(30,20,50,"#555")}</>,
};

const X0 = 527, Y0 = 459;
const L = ({ x, y, s, children }: { x: number; y: number; s?: number; children: React.ReactNode }) => (
  <Lbl $x={x - X0} $y={y - Y0} $s={s}>{children}</Lbl>
);

const RED = "#ee2e2a";

const Task = ({ w, ml, on, icon, children }: { w: number; ml: number; on?: boolean; icon: React.ReactNode; children: React.ReactNode }) => (
  <TaskBtn $w={w} $ml={ml} $on={on}>{icon}<span>{children}</span></TaskBtn>
);

export default function App() {
  return (
    <Screen>
      <Global />
      <VideoEdge />
      <Win>
        <TitleBar>
          <Qat>
            <QatBtn $w={23}>{I.save}</QatBtn>
            <QatBtn $w={23} $ml={23}>{I.undo}</QatBtn>
            <QatBtn $w={12} $ml={6}>{I.smallDd}</QatBtn>
            <QatBtn $w={21} $ml={15}>{I.redo}</QatBtn>
            <QatBtn $w={26} $ml={17}>{I.touch}</QatBtn>
            <QatBtn $w={12} $ml={7}>{I.smallDd}</QatBtn>
            <QatBtn $w={10} $ml={22}>{I.qatMore}</QatBtn>
          </Qat>
          <DocTitle>尚硅谷_宋红康_第3章_数组.pptx - PowerPoint</DocTitle>
          <WinCtrls>
            <WinBtn $w={74}>{I.ribbonMode}</WinBtn>
            <WinBtn $w={74}>{I.min}</WinBtn>
            <WinBtn $w={73}>{I.restore}</WinBtn>
            <WinBtn $w={73}>{I.close}</WinBtn>
          </WinCtrls>
        </TitleBar>

        <Tabs>
          <Tab $mr={13.5}>文件</Tab>
          <Tab $active>开始</Tab>
          <Tab>插入</Tab>
          <Tab>设计</Tab>
          <Tab>切换</Tab>
          <Tab>动画</Tab>
          <Tab>幻灯片放映</Tab>
          <Tab>审阅</Tab>
          <Tab>视图</Tab>
          <TellMe>{I.bulb}告诉我您想要做什么...</TellMe>
          <TabRight>
            <Login>登录</Login>
            <Share>{I.person}共享</Share>
          </TabRight>
        </Tabs>

        <Ribbon>
          <Group $w={188}>
            <GroupBody $pl={16} $gap={10}>
              <Big $w={54}>
                <BigIcon>{I.paste}</BigIcon>
                <PasteLabel>粘贴</PasteLabel>
                <Caret $mt={8} />
              </Big>
              <Small>
                <SmallRow $off><SmallIcon $w={22}>{I.cut}</SmallIcon>剪切</SmallRow>
                <SmallRow $off><SmallIcon $w={22}>{I.copy}</SmallIcon>复制<Caret $off $ml={5} /></SmallRow>
                <SmallRow $off><SmallIcon $w={22}>{I.brush}</SmallIcon>格式刷</SmallRow>
              </Small>
            </GroupBody>
            <GroupFoot><GroupName>剪贴板</GroupName><Launcher>{I.launcher}</Launcher></GroupFoot>
          </Group>

          <Group $w={192}>
            <GroupBody $pl={11} $gap={6}>
              <Big $w={74}>
                <BigIcon>{I.newSlide}</BigIcon>
                新建
                <WideLabel>幻灯片<Caret $ml={4} $mt={0} /></WideLabel>
              </Big>
              <Small>
                <SmallRow $gap={5}><SmallIcon $w={25}>{I.layout}</SmallIcon>版式<Caret $ml={2} /></SmallRow>
                <SmallRow $gap={5}><SmallIcon $w={25}>{I.reset}</SmallIcon>重置</SmallRow>
                <SmallRow $gap={3}><SmallIcon $w={27}>{I.section}</SmallIcon>节<Caret $ml={2} /></SmallRow>
              </Small>
            </GroupBody>
            <GroupFoot><GroupName>幻灯片</GroupName></GroupFoot>
          </Group>

          <Group $w={366}>
            <GroupBody $pl={8}>
              <Rows>
                <ToolRow $h={35} $mt={13}>
                  <Combo $w={148} $btn={20}><span /><i><Caret $off /></i></Combo>
                  <Combo $w={77} $btn={20}><span>24</span><i><Caret $off /></i></Combo>
                  <Tool $w={36} $ml={-2}><FmtLetter $s={24}>A</FmtLetter>{I.triUp}</Tool>
                  <Tool $w={20} $ml={7}><FmtLetter $s={19}>A</FmtLetter>{I.triDn}</Tool>
                  <VSep $ml={15} $mr={15} />
                  <Tool $w={22}><FmtLetter $s={18}>A</FmtLetter>{I.eraser}</Tool>
                </ToolRow>
                <ToolRow $h={32} $mt={16}>
                  <Tool $w={36} $ml={-3}><FmtLetter $b>B</FmtLetter></Tool>
                  <Tool $w={36}><FmtLetter $i $serif $b>I</FmtLetter></Tool>
                  <Tool $w={36}><FmtLetter $u $b>U</FmtLetter></Tool>
                  <Tool $w={38}><FmtLetter $b>S</FmtLetter></Tool>
                  <Tool $w={30}><FmtLetter $s={17}><s>abc</s></FmtLetter></Tool>
                  <StackTool $w={30} $ml={5}><FmtLetter $s={16}>AV</FmtLetter>{I.avArrow}</StackTool>
                  <Tool $w={18}><Caret $off /></Tool>
                  <Tool $w={30} $ml={5}><FmtLetter>Aa</FmtLetter></Tool>
                  <Tool $w={16}><Caret $off /></Tool>
                  <VSep $ml={10} $mr={12} />
                  <Tool $w={22}><FmtLetter $s={21}>A</FmtLetter></Tool>
                  <Tool $w={16} $ml={3}><Caret $off /></Tool>
                </ToolRow>
              </Rows>
            </GroupBody>
            <GroupFoot><GroupName>字体</GroupName><Launcher>{I.launcher}</Launcher></GroupFoot>
          </Group>

          <Group $w={482}>
            <GroupBody $pl={4}>
              <Rows>
                <ToolRow $h={36} $mt={9}>
                  <Tool $w={36} $ml={1}>{I.bullets}</Tool>
                  <Tool $w={16}><Caret $off /></Tool>
                  <Tool $w={36} $ml={3}>{I.numbers}</Tool>
                  <Tool $w={16}><Caret $off /></Tool>
                  <VSep $ml={10} $mr={0} />
                  <Tool $w={36} $ml={6}>{I.outdent}</Tool>
                  <Tool $w={36}>{I.indent}</Tool>
                  <VSep $ml={6} />
                  <Tool $w={36} $ml={6}>{I.spacing}</Tool>
                  <Tool $w={16}><Caret $off /></Tool>
                </ToolRow>
                <ToolRow $h={34} $mt={14}>
                  <Tool $w={36} $ml={1}>{I.al(0)}</Tool>
                  <Tool $w={35}>{I.al(1)}</Tool>
                  <Tool $w={35}>{I.al(2)}</Tool>
                  <Tool $w={35}>{I.al(3)}</Tool>
                  <Tool $w={34}>{I.dist}</Tool>
                  <VSep $ml={11} $mr={4} />
                  <Tool $w={30}>{I.cols}</Tool>
                  <Tool $w={16} $ml={2}><Caret $off /></Tool>
                </ToolRow>
              </Rows>
              <Small $ml={6}>
                <SmallRow $off><SmallIcon $w={24}>{I.textDir}</SmallIcon>文字方向<Caret $off $ml={4} /></SmallRow>
                <SmallRow $off><SmallIcon $w={24}>{I.alignText}</SmallIcon>对齐文本<Caret $off $ml={4} /></SmallRow>
                <SmallRow $off><SmallIcon $w={24}>{I.smart}</SmallIcon>转换为 SmartArt<Caret $off $ml={4} /></SmallRow>
              </Small>
            </GroupBody>
            <GroupFoot><GroupName>段落</GroupName><Launcher>{I.launcher}</Launcher></GroupFoot>
          </Group>

          <Group $w={529}>
            <GroupBody>
              <Gallery>
                <ShapeGrid>{Shapes.map((s, i) => <div key={i}>{s}</div>)}</ShapeGrid>
                <GalScroll>
                  <GalBtn $off>{I.upOff}</GalBtn>
                  <GalBtn>{I.down}</GalBtn>
                  <GalBtn>{I.more}</GalBtn>
                </GalScroll>
              </Gallery>
              <Big $w={60} $ml={9}>
                <BigIcon>{I.arrange}</BigIcon>
                排列
                <Caret $mt={8} />
              </Big>
              <Big $w={94} $off>
                <BigIcon>{I.quick}</BigIcon>
                快速样式
                <Caret $off $mt={8} />
              </Big>
              <Small $ml={2}>
                <SmallRow $off $gap={4}><SmallIcon $w={23}>{I.fill}</SmallIcon>形状填充<Caret $off $ml={4} /></SmallRow>
                <SmallRow $off $gap={4}><SmallIcon $w={23}>{I.outline}</SmallIcon>形状轮廓<Caret $off $ml={4} /></SmallRow>
                <SmallRow $off $gap={4}><SmallIcon $w={23}>{I.effects}</SmallIcon>形状效果<Caret $off $ml={4} /></SmallRow>
              </Small>
            </GroupBody>
            <GroupFoot><GroupName>绘图</GroupName><Launcher>{I.launcher}</Launcher></GroupFoot>
          </Group>

          <Group $w={120}>
            <GroupBody $pl={12}>
              <Small>
                <SmallRow $gap={8}><SmallIcon $w={22}>{I.find}</SmallIcon>查找</SmallRow>
                <SmallRow $gap={8}><ReplaceMark><b>ab</b>ac</ReplaceMark>替换<Caret $ml={9} /></SmallRow>
                <SmallRow $gap={8}><SmallIcon $w={22}>{I.select}</SmallIcon>选择<Caret $ml={1} /></SmallRow>
              </Small>
            </GroupBody>
            <GroupFoot><GroupName>编辑</GroupName></GroupFoot>
          </Group>
          <Collapse>{I.chevUp}</Collapse>
        </Ribbon>

        <Main>
          <Pane>
            <ThumbList>
              {[24, 25, 26, 27, 28, 29, 30, 31].map(n => (
                <ThumbRow key={n}>
                  <ThumbNo $sel={n === 27}>{n}</ThumbNo>
                  <Thumb $sel={n === 27}>
                    <ThumbSvg width="137" height="78" viewBox="0 0 139 80">{ThumbArt[n]}</ThumbSvg>
                  </Thumb>
                </ThumbRow>
              ))}
            </ThumbList>
            <VScroll $w={24}>
              <ScrollBtn>{I.up}</ScrollBtn>
              <ScrollThumb $top={314} $h={101} />
              <Spacer />
              <ScrollBtn>{I.down}</ScrollBtn>
            </VScroll>
          </Pane>
          <Stage>
            <SlideArea>
              <SlideWrap>
                <Slide>
                  <SlideTitle>二维数组的内存解析</SlideTitle>
                  <Overlay width="70" height="60" viewBox="527 459 70 60">
                    <g fill="none" strokeWidth="2.2">
                      <path d="m550 461 14 14-14 14-14-14z" stroke="#eeb27a"/>
                      <path d="m574 466 16 15-16 15-16-15z" stroke="#4db3ad"/>
                      <path d="m556 484 15 14-15 15-15-15z" stroke="#2e9c7c"/>
                    </g>
                  </Overlay>
                  <LogoBox><Ulogo s={34} /><LogoText>尚硅谷</LogoText></LogoBox>
                  <HeadRule />
                  <BlueBox $x={49} $y={93} $w={141} $h={549} />
                  <BlueBox $x={270} $y={71} $w={934} $h={595} />
                  <Code>{"int[][] arr1 = new int[4][];\narr1[1] = new int[]{1,2,3};\narr1[2] = new int[4];\narr1[2][1] = 30;"}</Code>

                  <Stack>
                    <StackCell /><StackCell /><StackCell /><StackCell />
                  </Stack>
                  <Cells $x={611} $y={364} $w={323} $h={61} $n={3}><Cell /><Cell /><Cell /></Cells>
                  <Cells $x={599} $y={518} $w={461} $h={53} $n={4}><Cell /><Cell /><Cell /><Cell /></Cells>

                  <L x={915} y={799}>0x1234</L>
                  <L x={926} y={868} s={26}>null</L>
                  <L x={926} y={933} s={26}>null</L>
                  <L x={926} y={997} s={26}>null</L>
                  <L x={926} y={1060} s={26}>null</L>
                  <L x={1026} y={933}>0x7788</L>
                  <L x={1007} y={1002}>0x6677</L>
                  <L x={669} y={1069}>arr1:0x1234</L>
                  <L x={1188} y={773}>0x7788</L>
                  <L x={1180} y={951}>0x6677</L>
                  <L x={1192} y={853} s={26}>0</L>
                  <L x={1299} y={853} s={26}>0</L>
                  <L x={1406} y={853} s={26}>0</L>
                  <L x={1190} y={899} s={30}>1</L>
                  <L x={1303} y={900} s={30}>2</L>
                  <L x={1400} y={899} s={30}>3</L>
                  <L x={1183} y={1003} s={26}>0</L>
                  <L x={1298} y={1003} s={26}>0</L>
                  <L x={1413} y={1003} s={26}>0</L>
                  <L x={1528} y={1003} s={26}>0</L>
                  <L x={1293} y={1036}>30</L>

                  <Overlay width="1218" height="685" viewBox="527 459 1218 685">
                    <g stroke={RED} fill="none" strokeLinecap="round">
                      <path d="M717 1045 876 849" strokeWidth="3.5"/>
                      <path d="M958 923 1130 829" strokeWidth="4"/>
                      <path d="M966 1030 1120 982" strokeWidth="4.5"/>
                      <path d="M878 825v19M1139 798v26M1126 959v13" strokeWidth="3"/>
                      <path d="m909 923 47 21M909 973l37 43" strokeWidth="3.5"/>
                      <path d="m1170 844 39 9M1275 844l40 10M1381 847l40 10M1282 993l32 22" strokeWidth="3.5"/>
                    </g>
                    <g fill={RED}>
                      <path d="m878 844-4 14-9-7z"/>
                      <path d="m1138 825-15 1 5 10z"/>
                      <path d="m1127 980-15-2 3 11z"/>
                    </g>
                  </Overlay>
                  <Highlight />
                  <Overlay $x={13} $y={61} width="60" height="70" viewBox="540 520 60 70">
                    <path d="m563 537 1 28 7-6 6 13 5-2-5-13 9-1z" fill="#05070c"/>
                    <path d="M577 572h6" stroke="#9fc0e6" strokeWidth="1"/>
                  </Overlay>
                </Slide>
              </SlideWrap>
              <RightCol>
                <VScroll $w={23} $h={635}>
                  <ScrollBtn>{I.up}</ScrollBtn>
                  <ScrollThumb $top={266} $h={28} />
                  <Spacer />
                  <ScrollBtn>{I.down}</ScrollBtn>
                </VScroll>
                <Nav $mt={9}>{I.dblUp}</Nav>
                <Nav $mt={14}>{I.dblDn}</Nav>
              </RightCol>
            </SlideArea>
            <Notes>单击此处添加备注</Notes>
          </Stage>
        </Main>

        <Status>
          <StatusItem $ml={13}>幻灯片 第 27 张，共 56 张</StatusItem>
          <StatusItem $ml={52}>{I.spell}</StatusItem>
          <StatusItem $ml={28}>中文(中国)</StatusItem>
          <StatusItem $ml={886}>{I.notes}备注</StatusItem>
          <StatusItem $ml={33}>{I.comment}批注</StatusItem>
          <StatusItem $ml={30} $pb={0}><ViewBtn $w={62} $on>{I.vNormal}</ViewBtn></StatusItem>
          <StatusItem $ml={0} $pb={0}><ViewBtn $w={60}>{I.vSorter}</ViewBtn></StatusItem>
          <StatusItem $ml={0} $pb={0}><ViewBtn $w={60}>{I.vRead}</ViewBtn></StatusItem>
          <StatusItem $ml={0} $pb={0}><ViewBtn $w={60}>{I.vShow}</ViewBtn></StatusItem>
          <Ime>
            <Ulogo s={30} />
            <ImeCn>中</ImeCn>
            <TrayIcon $ml={6}><S w={20} h={24}><path d="M12 1c-1 9-4 13-10 16 6 7 17 3 17-6-3 3-7 0-7-10z" fill="#3c8ccb"/></S></TrayIcon>
            <TrayIcon $ml={14}><S w={15} h={24}><circle cx="4" cy="6" r="3" stroke="#3c8ccb" strokeWidth="1.6"/><path d="M11 16c2 2 1 5-2 7" stroke="#3c8ccb" strokeWidth="2"/></S></TrayIcon>
            <TrayIcon $ml={10}><S w={28} h={22}><rect x="1" y="1" width="26" height="20" fill="#3c8ccb"/><path d="M4 6h20M4 10h20M7 15h14" stroke="#fff" strokeWidth="2" strokeDasharray="2 1.5"/></S></TrayIcon>
            <TrayIcon $ml={9}><S w={17} h={24}><circle cx="8.5" cy="6" r="5" fill="#3c8ccb"/><path d="M0 23c0-12 17-12 17 0z" fill="#3c8ccb"/></S></TrayIcon>
            <TrayIcon $ml={12}><S w={25} h={26}><path d="M24 2c-5-1-9 2-9 7L2 21l3 4 13-12c5 0 7-4 6-8l-4 3-3-3z" fill="#3c8ccb"/></S></TrayIcon>
          </Ime>
          <StatusItem $ml={234}>80%</StatusItem>
          <StatusItem $ml={26}>{I.fit}</StatusItem>
        </Status>

        <TaskBar>
          <Orb><WinFlag /></Orb>
          <TrayIcon $ml={114}><S w={23} h={26}><path d="M17 2C7 4 2 10 3 17c1 7 10 9 15 4 3-3 2-7 1-9h-8l-1 4h4c0 2-4 3-6 0-2-4 3-10 9-10z" fill="#c9402b"/></S></TrayIcon>
          <TrayIcon $ml={43}><S w={24}><circle cx="12" cy="12" r="11" fill="#5db8e8"/><path d="M12 12V1a11 11 0 0 1 11 11z" fill="#ee6a8c"/><path d="M12 12h11a11 11 0 0 1-11 11z" fill="#f6d23c"/><path d="M12 12v11A11 11 0 0 1 1 12z" fill="#7ccb5e"/><circle cx="12" cy="12" r="3" fill="#fff"/></S></TrayIcon>
          <TrayIcon $ml={41}><S w={24}><circle cx="12" cy="12" r="11" fill="#e0a92c"/><path d="M12 1a11 11 0 0 1 9.6 5.6H12a5.4 5.4 0 0 0-5 3L3 3.7A11 11 0 0 1 12 1z" fill="#d6492f"/><path d="M3 3.7 8 13l4 10A11 11 0 0 1 3 3.7z" fill="#4aa34d"/><circle cx="12" cy="12" r="4.6" fill="#4a8be0" stroke="#e7edf3" strokeWidth="1.4"/></S></TrayIcon>
          <Task w={141} ml={25} icon={<S w={24} h={28}><path d="M2 4h20v22H2z" fill="#f1cf6b"/><path d="M5 10h14v16H5z" fill="#7eb9d6"/><path d="M9 15h6v11H9z" fill="#e8f2f7"/></S>}>Window...</Task>
          <Task w={153} ml={18} icon={<S w={26}><rect x="1" y="1" width="24" height="24" rx="2" fill="#3a2f66"/><circle cx="13" cy="13" r="8" stroke="#f2f2f2" strokeWidth="3" strokeDasharray="3 2"/></S>}>workspa...</Task>
          <Task w={153} ml={6} on icon={<S w={27} h={27}><rect x="6" y="2" width="20" height="23" fill="#f1a58a"/><rect x="1" y="3" width="15" height="22" fill="#d35230"/><path d="M6 20V8h3.500c4 0 4 6 0 6H6" stroke="#fff" strokeWidth="2"/></S>}>尚硅谷_宋...</Task>
          <Task w={155} ml={5} icon={<S w={26}><circle cx="15" cy="8" r="7" fill="#f4c23a"/><circle cx="9" cy="12" r="8" fill="#f8d968"/><path d="M6 20c4-2 9 0 8 5-4 1-8 0-8-5z" fill="#4f9fe0"/><circle cx="8" cy="18" r="4" fill="#4f9fe0"/></S>}>Java-温希...</Task>
          <Task w={156} ml={0} icon={<S w={26}><circle cx="15" cy="8" r="7" fill="#f4c23a"/><circle cx="9" cy="12" r="8" fill="#f8d968"/><path d="M6 20c4-2 9 0 8 5-4 1-8 0-8-5z" fill="#4f9fe0"/><circle cx="8" cy="18" r="4" fill="#4f9fe0"/></S>}>大数据李...</Task>
          <Task w={154} ml={4} icon={<S w={25}><path d="M1 6V1h5M19 1h5v5M24 19v5h-5M6 24H1v-5" stroke="#3a8fd3" strokeWidth="2"/><rect x="4" y="4" width="17" height="17" fill="#e6eef5" stroke="#446"/><path d="M5 17l5-5 4 4 6-3v8H5z" fill="#3a8fd3"/></S>}>一维数组...</Task>
          <Task w={153} ml={5} icon={<S w={28}><circle cx="8" cy="6" r="5" fill="#33363c"/><path d="M8 10v16" stroke="#33363c" strokeWidth="3"/><rect x="11" y="8" width="16" height="11" fill="#c4242a"/></S>}>Recordin...</Task>
          <TrayText $ml={22}>api</TrayText>
          <TrayIcon $ml={13}><S w={24} h={30}><path d="M3 13h15v16H3z" fill="#f4f4f4" stroke="#333"/><path d="M8 7c0-7 11-7 11 0 0 4-5 4-5 9M14 19v3" stroke="#f2c21d" strokeWidth="3.500"/><path d="M6 20h6M6 24h6" stroke="#333"/></S></TrayIcon>
          <TrayText $ml={26} $s={22}>»</TrayText>
          <TrayIcon $ml={17}><S w={26} h={30}><rect x="1" y="1" width="24" height="28" rx="6" fill="#e2622a"/><path d="M19 8c-6-3-11 0-8 3l5 3c3 3-2 7-8 4" stroke="#fff" strokeWidth="3.4"/></S></TrayIcon>
          <TrayIcon $ml={29}><S w={12} h={9}><path d="M0 9 6 0l6 9z" fill="#e8eef4"/></S></TrayIcon>
          <TrayIcon $ml={21}><S w={23} h={28}><circle cx="15" cy="9" r="7" fill="#f4c23a"/><circle cx="9" cy="14" r="8" fill="#a8d4f2"/><circle cx="14" cy="22" r="5" fill="#4f9fe0"/></S></TrayIcon>
          <TrayIcon $ml={19}><S w={18} h={26}><path d="M1 9h5l7-7v22l-7-7H1z" fill="#dfe6ec" stroke="#6c7a88"/><path d="M15 9c2 2 2 6 0 8" stroke="#d9e2ea" strokeWidth="1.4"/></S></TrayIcon>
          <TrayIcon $ml={15}><S w={27}><circle cx="13.5" cy="13.5" r="13" fill="#3f8f2f"/><circle cx="13.5" cy="13.5" r="9" fill="#f1d22d"/><path d="M13.5 8v11M8 13.5h11" stroke="#2e6a1c" strokeWidth="3"/></S></TrayIcon>
          <TrayIcon $ml={12}><S w={27} h={30}><path d="M8 1h11l7 7v13l-7 8H8l-7-8V8z" fill="#d31818" stroke="#eee" strokeWidth="1.2"/></S></TrayIcon>
          <TrayIcon $ml={12}><S w={26} h={30}><path d="M3 8h14v18H3z" fill="#e9e9e9" stroke="#333" strokeWidth="1.2"/><path d="M7 1v7M13 1v7" stroke="#eee" strokeWidth="2"/><path d="m16 14 8 14H8z" fill="#edc01e" stroke="#744"/></S></TrayIcon>
          <TrayIcon $ml={13}><S w={23} h={30}><rect x="3" y="8" width="17" height="20" rx="2" fill="#f3f3f3" stroke="#222" strokeWidth="1.5"/><path d="M8 1v7M15 1v7" stroke="#f2f2f2" strokeWidth="2"/><path d="M11 14v9" stroke="#333" strokeWidth="2"/></S></TrayIcon>
          <TrayIcon $ml={15}><S w={26} h={30}><rect x="3" y="1" width="20" height="20" fill="#6f7fa0" stroke="#1a2a55" strokeWidth="1.6"/><circle cx="13" cy="11" r="7" stroke="#d6242a" strokeWidth="2.4"/><path d="m8 6 10 10" stroke="#d6242a" strokeWidth="2.4"/><path d="M1 24h9M16 24h9M2 28h7M17 28h7" stroke="#1a2a55" strokeWidth="2"/></S></TrayIcon>
          <TrayText $ml={38} $s={19}>下午 5:14</TrayText>
          <ShowDesk />
        </TaskBar>
      </Win>
    </Screen>
  );
}
